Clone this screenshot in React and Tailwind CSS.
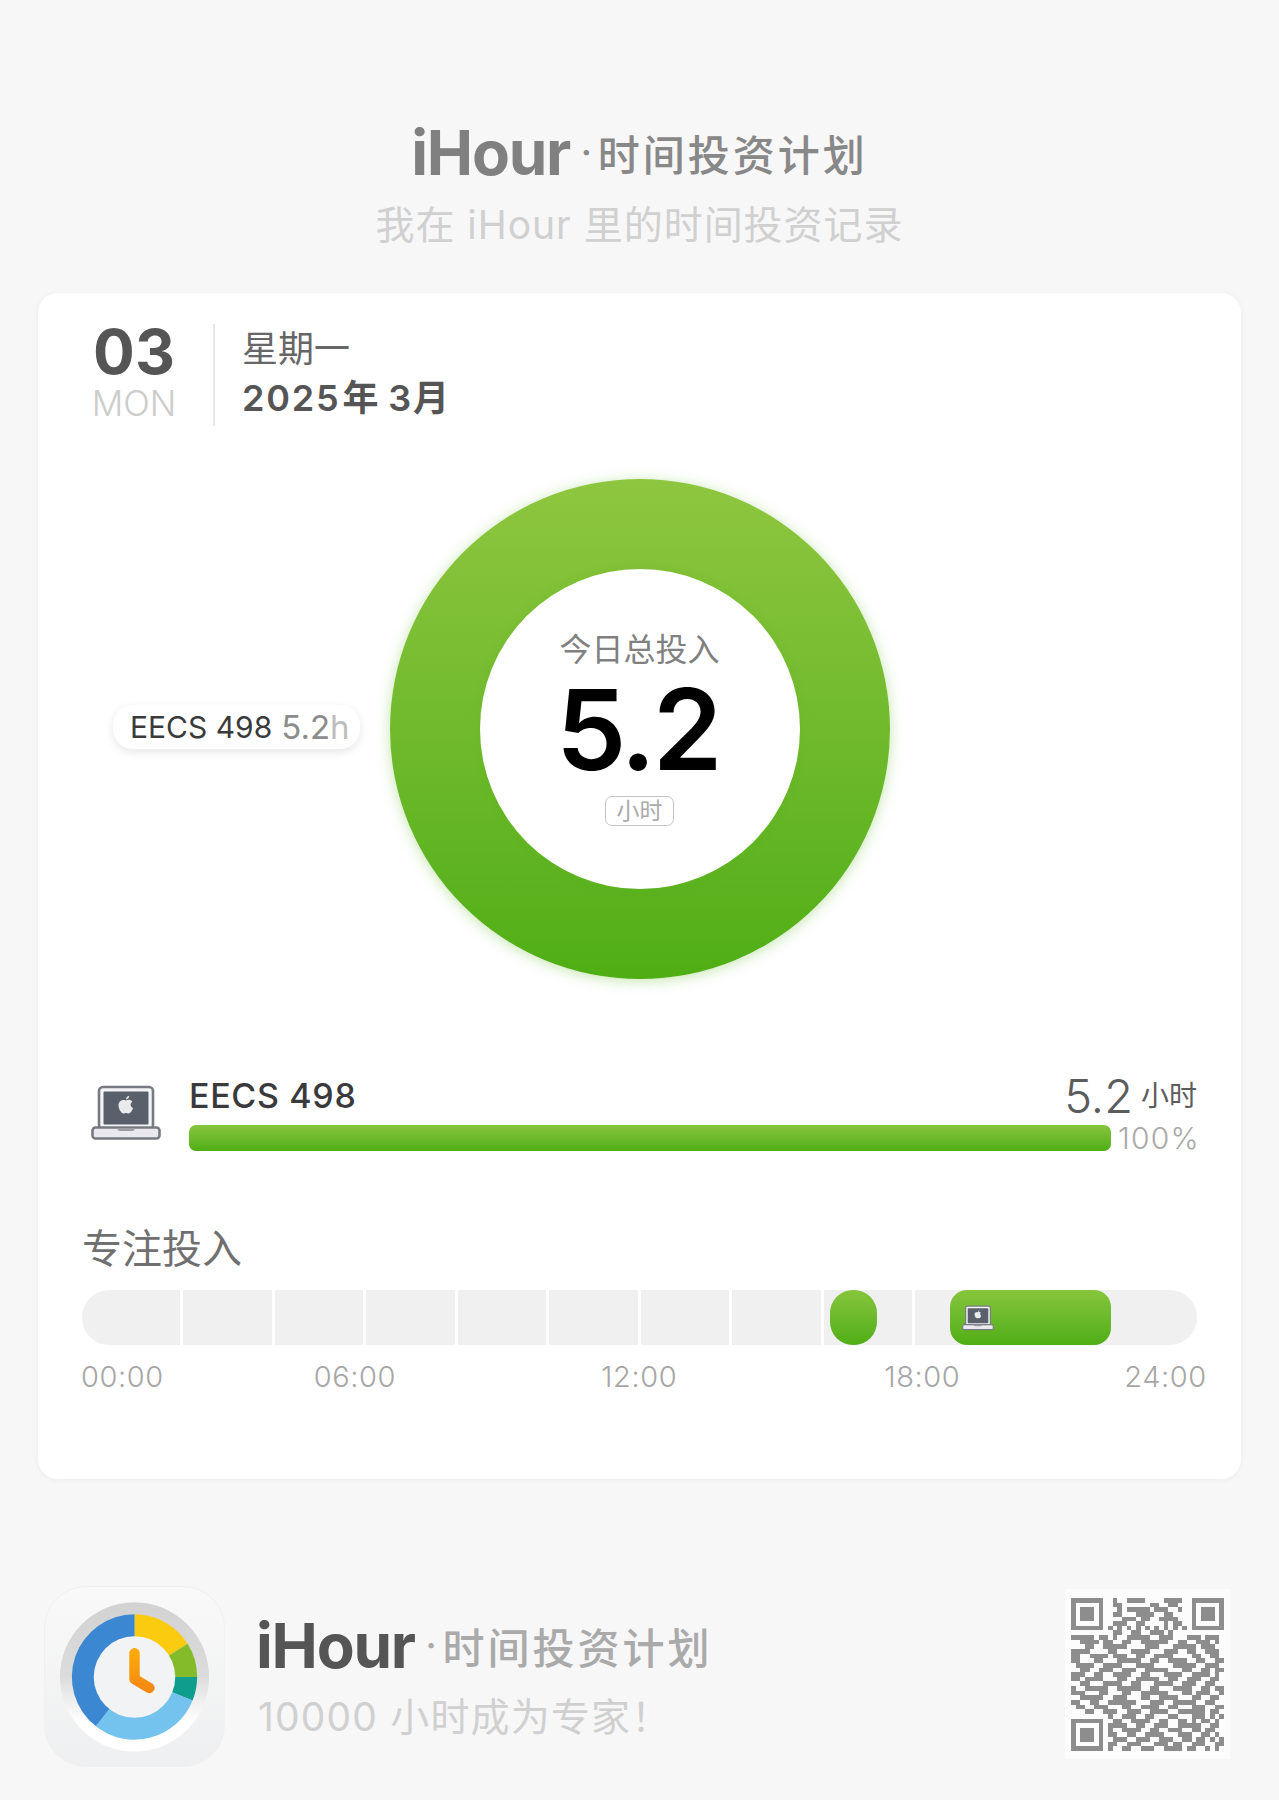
import React from "react";

const qrRows = [
  "11111110010011110000111100" + "1111111",
  "10000010011000000110011000" + "1000001",
  "10111010001011111011100100" + "1011101",
  "10111010011000111100110000" + "1011101",
  "10111010000111011001111000" + "1011101",
  "10000010011100110000101100" + "1000001",
  "11111110101010101010101010" + "1111111",
  "00000000011001100111010000" + "0000000",
  "111110110100111110011100011101110",
  "001111011001100111111001100111010",
  "000110011111000011100011111011100",
  "111100001100011110001110011001110",
  "110011110111001100111100001100110",
  "110001100011111001100111100110011",
  "011110011110001111000011111001110",
  "001100111001110011111000110011011",
  "111001100111100110001111001111010",
  "110111100011001111100110011100110",
  "001100011110011000111100111001100",
  "100111110011111001100011110011011",
  "111000110001100111111000110111001",
  "001111100111000110011110001100110",
  "110011001111110001110011111001100",
  "011001110001100111100110001110011",
  "000110011100111001111001111110110",
  "000000001001110011000110001110101",
  "111111100110011110011001101011010",
  "100000101111001100111001111100110",
  "101110101001111001100111001101100",
  "101110101100110011110001110011010",
  "101110100111001110011100110110101",
  "100000101100111000111011001110011",
  "111111101001100111001111011001010",
];

const qrPath = qrRows
  .flatMap((row, y) =>
    [...row].map((c, x) => (c === "1" ? `M${x} ${y}h1v1h-1z` : ""))
  )
  .join("");

const arc = (start, end, r0, r1) => {
  const p = (a, r) => {
    const t = ((a - 90) * Math.PI) / 180;
    return `${(90 + r * Math.cos(t)).toFixed(2)} ${(90 + r * Math.sin(t)).toFixed(2)}`;
  };
  const large = end - start > 180 ? 1 : 0;
  return `M${p(start, r1)}A${r1} ${r1} 0 ${large} 1 ${p(end, r1)}L${p(end, r0)}A${r0} ${r0} 0 ${large} 0 ${p(start, r0)}Z`;
};

const slices = [
  { from: 0, to: 58, fill: "#fbcb0f" },
  { from: 58, to: 90, fill: "#83bb2a" },
  { from: 90, to: 112, fill: "#0f9d8e" },
  { from: 112, to: 218, fill: "#74c3ee" },
  { from: 218, to: 360, fill: "#3c87d2" },
];

const Laptop = ({ className }) => (
  <svg viewBox="0 0 70 56" className={className}>
    <rect x="8" y="2" width="54" height="42" rx="4" fill="#f3f4f6" stroke="#777a80" strokeWidth="2.6" />
    <rect x="12.5" y="6.5" width="45" height="33" rx="1" fill="#5a606b" />
    <path d="M35 15.5c1.6-1 5-1.2 6.3 1.2-2.600 1.700-2 5.300.8 6.300-1 2.700-2.800 5.500-4.600 5.500-1 0-1.500-.6-2.500-.6s-1.500.6-2.500.6c-2.200 0-5-4.800-5-8.300 0-4.100 4.400-6 7.500-4.700z" fill="#e8eaec" />
    <path d="M35 14.500c0-2 1.300-3.400 3.200-3.700 0 2-1.300 3.500-3.200 3.700z" fill="#e8eaec" />
    <rect x="1.500" y="42.500" width="67" height="11" rx="3" fill="#e9e9ef" stroke="#777a80" strokeWidth="2.600" />
    <path d="M26 43h18c0 2-1.500 3-3 3H29c-1.500 0-3-1-3-3z" fill="#9b9da3" />
  </svg>
);

const AppIcon = () => (
  <svg viewBox="0 0 180 180" className="w-[180px] h-[180px]">
    <defs>
      <linearGradient id="hand" x1="0" y1="0" x2="0" y2="1">
        <stop offset="0" stopColor="#fba90a" />
        <stop offset="1" stopColor="#f58a12" />
      </linearGradient>
      <linearGradient id="rim" x1="0" y1="0" x2="0" y2="1">
        <stop offset="0" stopColor="#d2d2d2" />
        <stop offset="0.5" stopColor="#dcdcdc" />
        <stop offset="0.8" stopColor="#ffffff" />
        <stop offset="1" stopColor="#ffffff" />
      </linearGradient>
    </defs>
    <circle cx="90" cy="90" r="75" fill="url(#rim)" />
    {slices.map((s) => (
      <path key={s.fill} d={arc(s.from, s.to, 40, 63)} fill={s.fill} />
    ))}
    <circle cx="90" cy="90" r="41" fill="#f2f3f4" />
    <path d="M90 66v26l15 9" fill="none" stroke="url(#hand)" strokeWidth="10.500" strokeLinecap="round" strokeLinejoin="round" />
  </svg>
);

const hourTicks = [1, 2, 3, 4, 5, 6, 7, 8, 9];

const App = () => {
  return (
    <div className="w-full h-[1800px] bg-[#f7f7f7] font-['Inter','Noto_Sans_CJK_SC',sans-serif] overflow-hidden">
      {/* Header */}
      <div className="pt-[118px] flex flex-col items-center">
        <div className="flex items-center h-[70px]">
          <span className="text-[62px] leading-none font-bold tracking-[-0.02em] text-[#808080]">iHour</span>
          <span className="text-[32px] font-bold text-[#8a8a8a] ml-[11px] mr-[6px]">·</span>
          <span className="mt-[6px] text-[42px] leading-none font-medium tracking-[3px] text-[#888888]">时间投资计划</span>
        </div>
        <p className="mt-[13px] text-[39px] leading-[48px] text-[#d0d0d0] tracking-[0.025em]">我在 iHour 里的时间投资记录</p>
      </div>

      {/* Card */}
      <div className="mx-[38px] mt-[44px] h-[1186px] bg-white rounded-[20px] shadow-[0_1px_6px_rgba(0,0,0,0.05)] px-[44px]">
        <div className="flex pt-[31px]">
          <div className="w-[104px] -mt-[2px] flex flex-col items-center">
            <span className="text-[62px] leading-[60px] font-bold text-[#555555]">03</span>
            <span className="text-[35px] leading-[42px] font-light text-[#cccccc]">MON</span>
          </div>
          <div className="w-[2px] h-[102px] bg-[#e6e6e6] ml-[27px]" />
          <div className="ml-[27px] flex flex-col">
            <span className="text-[36px] leading-[50px] text-[#666666]">星期一</span>
            <span className="mt-[1px] text-[36px] leading-[46px] font-semibold text-[#555555] tracking-[0.05em]">
              2025<span className="ml-[2px]">年</span><span className="ml-[8px]">3月</span>
            </span>
          </div>
        </div>

        {/* Ring */}
        <div className="relative mt-[53px] h-[500px] flex justify-center">
          <div className="absolute left-[31px] top-[226px] h-[44px] w-[247px] rounded-[20px] bg-white shadow-[0_3px_10px_rgba(0,0,0,0.1)] flex items-center pl-[17px] text-[30px] whitespace-nowrap">
            <span className="text-[#3a3a3c]">EECS 498</span>
            <span className="text-[33px] leading-none text-[#8c8c8c] ml-[9px]">5.2</span>
            <span className="text-[33px] leading-none text-[#bdbdbd]">h</span>
          </div>
          <div className="w-[500px] h-[500px] rounded-full bg-gradient-to-b from-[#8ec63f] to-[#4fae14] shadow-[0_2px_14px_rgba(90,180,30,0.35)] flex items-center justify-center">
            <div className="w-[320px] h-[320px] rounded-full bg-white flex flex-col items-center shadow-[0_0_8px_rgba(90,180,30,0.25)]">
              <span className="mt-[61px] text-[32px] leading-[40px] text-[#808080]">今日总投入</span>
              <span className="mt-[4px] -ml-[4px] text-[112px] leading-[110px] font-semibold text-black tracking-[-0.03em]">5.2</span>
              <span className="mt-[12px] w-[69px] h-[30px] border-[1.5px] border-[#c4c4c4] rounded-[7px] flex items-center justify-center text-[23px] leading-none text-[#ababab]">小时</span>
            </div>
          </div>
        </div>

        {/* Project row */}
        <div className="mt-[96px] flex">
          <div className="w-[70px] ml-[9px] pt-[10px]">
            <Laptop className="w-[70px] h-[56px]" />
          </div>
          <div className="flex-1 ml-[28px] min-w-0">
            <div className="flex items-end justify-between h-[42px]">
              <span className="text-[34px] leading-[40px] font-medium text-[#3a3a3c] tracking-[0.02em] mb-[1px]">EECS 498</span>
              <div className="flex items-center -mb-[4px]">
                <span className="text-[47px] leading-[50px] font-light text-[#5c5c5c]">5.2</span>
                <span className="ml-[8px] text-[28px] leading-none text-[#5c5c5c]">小时</span>
              </div>
            </div>
            <div className="flex items-center mt-[5px]">
              <div className="w-[922px] shrink-0 h-[26px] rounded-[7px] bg-gradient-to-b from-[#86c53c] to-[#4fae14]" />
              <span className="ml-[7px] mt-[1px] text-[30px] leading-none font-light text-[#a9a9a9] tracking-[0.04em] whitespace-nowrap">100%</span>
            </div>
          </div>
        </div>

        {/* Focus timeline */}
        <div className="mt-[71px]">
          <h3 className="text-[40px] leading-[50px] font-normal text-[#707070]">专注投入</h3>
          <div className="relative mt-[16px] h-[55px] rounded-[27px] bg-[#f0f0f0] overflow-hidden">
            {hourTicks.map((i) => (
              <div key={i} className="absolute top-0 bottom-0 w-[3px] bg-white" style={{ left: 98 + 91.5 * (i - 1) }} />
            ))}
            <div className="absolute top-0 bottom-0 left-[748px] w-[47px] rounded-[23px] bg-gradient-to-b from-[#86c53c] to-[#4fae14]" />
            <div className="absolute top-0 bottom-0 left-[868px] w-[161px] rounded-[17px] bg-gradient-to-b from-[#86c53c] to-[#4fae14] pl-[12px] flex items-center">
              <Laptop className="w-[32px] h-[26px]" />
            </div>
          </div>
          <div className="mt-[16px] -ml-[1px] flex h-[32px] text-[29px] leading-[32px] text-[#a6a6a6] font-light tracking-[0.02em] whitespace-nowrap">
            <span>00:00</span>
            <span className="ml-[150px]">06:00</span>
            <span className="ml-[205px]">12:00</span>
            <span className="ml-[207px]">18:00</span>
            <span className="ml-[164px]">24:00</span>
          </div>
        </div>
      </div>

      {/* Footer */}
      <div className="mt-[107px] ml-[44px] mr-[49px] flex items-center">
        <div className="w-[181px] h-[181px] rounded-[42px] bg-gradient-to-b from-[#f9f9f9] to-[#eeeff0] border border-[#f0f0f0] flex items-center justify-center">
          <AppIcon />
        </div>
        <div className="ml-[31px] flex flex-col -mt-[2px]">
          <div className="flex items-center h-[70px]">
            <span className="text-[62px] leading-none font-bold tracking-[-0.02em] text-[#555555]">iHour</span>
            <span className="text-[32px] font-bold text-[#aaaaaa] ml-[11px] mr-[6px]">·</span>
            <span className="mt-[6px] text-[42px] leading-none font-medium tracking-[3px] text-[#aaaaaa]">时间投资计划</span>
          </div>
          <p className="mt-[12px] ml-[2px] text-[39px] leading-[48px] text-[#d0d0d0] tracking-[0.03em]">10000 小时成为专家！</p>
        </div>
        <div className="ml-auto self-start mt-[3px] w-[165px] h-[170px] bg-[#fcfcfc] flex items-center justify-center">
          <svg viewBox="0 0 33 33" className="w-[153px] h-[153px]" shapeRendering="crispEdges">
            <path d={qrPath} fill="#8d8d8d" />
          </svg>
        </div>
      </div>
    </div>
  );
};

export default App;
